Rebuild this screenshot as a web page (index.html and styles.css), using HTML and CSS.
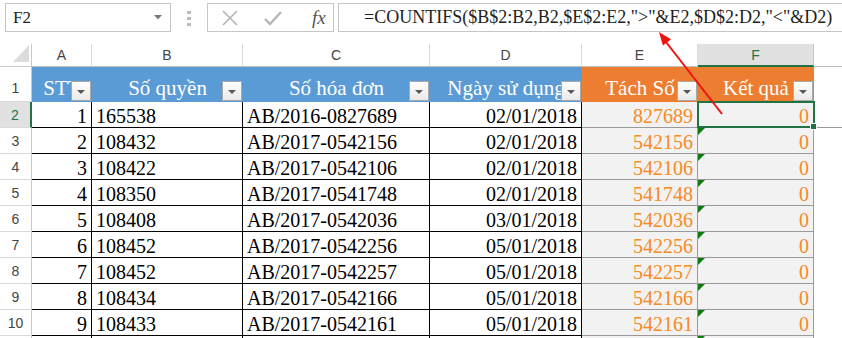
FILE: index.html
```html
<!DOCTYPE html>
<html lang="vi">
<head>
  <meta charset="UTF-8" />
  <title>COUNTIFS</title>
  <link rel="stylesheet" href="styles.css">
</head>
<body>
  <div class="topbar">
    <div class="namebox">
      <span>F2</span>
      <svg class="caret" width="8" height="5" viewBox="0 0 8 5"><path d="M0 0H8L4 4.5Z" fill="#7a7a7a"/></svg>
    </div>
    <div class="grip"><i></i><i></i><i></i></div>
    <div class="fbuttons">
      <svg width="16" height="16" viewBox="0 0 16 16"><path d="M1 1L15 15M15 1L1 15" stroke="#b5b5b5" stroke-width="1.6" fill="none"/></svg>
      <svg width="18" height="16" viewBox="0 0 18 16"><path d="M1 9L6 14L17 2" stroke="#b5b5b5" stroke-width="2.4" fill="none"/></svg>
      <span class="fx">fx</span>
    </div>
    <div class="formula">=COUNTIFS($B$2:B2,B2,$E$2:E2,"&gt;"&amp;E2,$D$2:D2,"&lt;"&amp;D2)</div>
  </div>

  <div class="sheet">
    <!-- column letters -->
    <div class="corner"><svg width="17" height="18" viewBox="0 0 17 18"><path d="M16 0V17H0Z" fill="#dcdcdc"/></svg></div>
    <div class="ch">A</div>
    <div class="ch">B</div>
    <div class="ch">C</div>
    <div class="ch">D</div>
    <div class="ch">E</div>
    <div class="ch sel">F</div>
    <div class="ch end"></div>

    <!-- table header -->
    <div class="rh tall">1</div>
    <div class="th blue">STT<span class="filter"></span></div>
    <div class="th blue">Số quyền<span class="filter"></span></div>
    <div class="th blue">Số hóa đơn<span class="filter"></span></div>
    <div class="th blue">Ngày sử dụng<span class="filter"></span></div>
    <div class="th orange">Tách Số<span class="filter"></span></div>
    <div class="th orange">Kết quả<span class="filter"></span></div>
    <div class="blank"></div>

    <div class="rh sel">2</div>
    <div class="c r">1</div><div class="c">165538</div><div class="c">AB/2016-0827689</div><div class="c r">02/01/2018</div>
    <div class="calc">827689</div><div class="calc active">0</div><div class="blank line"></div>

    <div class="rh">3</div>
    <div class="c r">2</div><div class="c">108432</div><div class="c">AB/2017-0542156</div><div class="c r">02/01/2018</div>
    <div class="calc">542156</div><div class="calc flag">0</div><div class="blank"></div>

    <div class="rh">4</div>
    <div class="c r">3</div><div class="c">108422</div><div class="c">AB/2017-0542106</div><div class="c r">02/01/2018</div>
    <div class="calc">542106</div><div class="calc flag">0</div><div class="blank"></div>

    <div class="rh">5</div>
    <div class="c r">4</div><div class="c">108350</div><div class="c">AB/2017-0541748</div><div class="c r">02/01/2018</div>
    <div class="calc">541748</div><div class="calc flag">0</div><div class="blank"></div>

    <div class="rh">6</div>
    <div class="c r">5</div><div class="c">108408</div><div class="c">AB/2017-0542036</div><div class="c r">03/01/2018</div>
    <div class="calc">542036</div><div class="calc flag">0</div><div class="blank"></div>

    <div class="rh">7</div>
    <div class="c r">6</div><div class="c">108452</div><div class="c">AB/2017-0542256</div><div class="c r">05/01/2018</div>
    <div class="calc">542256</div><div class="calc flag">0</div><div class="blank"></div>

    <div class="rh">8</div>
    <div class="c r">7</div><div class="c">108452</div><div class="c">AB/2017-0542257</div><div class="c r">05/01/2018</div>
    <div class="calc">542257</div><div class="calc flag">0</div><div class="blank"></div>

    <div class="rh">9</div>
    <div class="c r">8</div><div class="c">108434</div><div class="c">AB/2017-0542166</div><div class="c r">05/01/2018</div>
    <div class="calc">542166</div><div class="calc flag">0</div><div class="blank"></div>

    <div class="rh">10</div>
    <div class="c r">9</div><div class="c">108433</div><div class="c">AB/2017-0542161</div><div class="c r">05/01/2018</div>
    <div class="calc">542161</div><div class="calc flag">0</div><div class="blank"></div>

    <!-- next row, only its top edge is visible -->
    <div class="rh"></div>
    <div class="c r"></div><div class="c"></div><div class="c"></div><div class="c r"></div>
    <div class="calc"></div><div class="calc flag"></div><div class="blank"></div>
  </div>

  <svg class="arrow" width="842" height="338" viewBox="0 0 842 338">
    <line x1="722" y1="114" x2="666" y2="42" stroke="#f01010" stroke-width="2"/>
    <path d="M659 32L671 39.3L662.9 45.4Z" fill="#f01010"/>
  </svg>
</body>
</html>
```

FILE: styles.css
```css
body {
  margin: 0;
  width: 842px;
  height: 338px;
  overflow: hidden;
  position: relative;
  background: #fff;
  font-family: "Liberation Serif", serif;
  color: #000;
}
.topbar {
  display: flex;
  align-items: flex-start;
  height: 44px;
  padding: 3px 0 0 5px;
  box-sizing: border-box;
}
.namebox {
  width: 166px;
  height: 29px;
  box-sizing: border-box;
  border: 1px solid #c6c6c6;
  display: flex;
  align-items: center;
  justify-content: space-between;
  padding: 0 8px 0 7px;
  font-size: 17px;
  color: #222;
}
.grip {
  margin: 8px 0 0 16px;
  display: flex;
  flex-direction: column;
  gap: 3px;
}
.grip i {
  display: block;
  width: 4px;
  height: 3px;
  background: #bdbdbd;
}
.fbuttons {
  margin-left: 16px;
  width: 127px;
  height: 29px;
  box-sizing: border-box;
  border: 1px solid #c6c6c6;
  display: flex;
  align-items: center;
  padding-left: 14px;
  gap: 26px;
}
.fx {
  font-style: italic;
  font-size: 19px;
  color: #555;
  margin-left: 4px;
}
.formula {
  margin-left: 4px;
  flex: 1;
  height: 29px;
  box-sizing: border-box;
  border: 1px solid #c6c6c6;
  border-right: none;
  padding-left: 25px;
  font-size: 18px;
  line-height: 27px;
  white-space: nowrap;
  color: #222;
}

.sheet {
  display: grid;
  grid-template-columns: 32px 60px 151px 187px 152px 116px 116px 28px;
  grid-template-rows: 23px 35px repeat(10, 26px);
}
.sheet > div {
  box-sizing: border-box;
  position: relative;
}
.corner {
  border-right: 1px solid #c8c8c8;
  border-bottom: 1px solid #c8c8c8;
  display: flex;
  justify-content: flex-end;
  align-items: flex-end;
  padding: 0 1px 3px 0;
}
.ch {
  border-right: 1px solid #dadada;
  border-bottom: 1px solid #bfbfbf;
  font-family: "Liberation Sans", sans-serif;
  font-size: 14px;
  color: #444;
  text-align: center;
  line-height: 23px;
}
.ch.sel {
  background: #e1e1e1;
  color: #217346;
  border-bottom: 2px solid #217346;
  border-right-color: #c8c8c8;
}
.ch.end {
  border-right: none;
}
.rh {
  border-right: 1px solid #c8c8c8;
  border-bottom: 1px solid #dadada;
  font-family: "Liberation Sans", sans-serif;
  font-size: 14px;
  color: #444;
  text-align: center;
  line-height: 26px;
}
.rh.tall {
  line-height: 42px;
}
.rh.sel {
  background: #e1e1e1;
  color: #217346;
  border-right: 2px solid #217346;
}

.th {
  color: #fff;
  font-size: 21px;
  display: flex;
  justify-content: center;
  align-items: flex-end;
  padding-bottom: 3px;
  white-space: nowrap;
  line-height: 1;
}
.th.blue {
  background: #5b9bd5;
}
.th.orange {
  background: #ed7d31;
}
.filter {
  position: absolute;
  right: 1px;
  bottom: 1px;
  width: 20px;
  height: 20px;
  box-sizing: border-box;
  border: 1px solid #a9a9a9;
  background: linear-gradient(#ffffff, #e9e9e9);
}
.filter::after {
  content: "";
  position: absolute;
  left: 5px;
  top: 8px;
  border-left: 4px solid transparent;
  border-right: 4px solid transparent;
  border-top: 4px solid #595959;
}

.c {
  border-right: 1px solid #000;
  border-bottom: 1px solid #000;
  font-size: 20px;
  line-height: 28px;
  padding: 0 4px;
  white-space: nowrap;
}
.r {
  text-align: right;
}
.calc {
  background: #f2f2f2;
  border-right: 1px solid #9a9a9a;
  border-bottom: 1px solid #9a9a9a;
  color: #f78a23;
  font-size: 20px;
  line-height: 28px;
  padding: 0 4px;
  text-align: right;
}
.calc.flag::before {
  content: "";
  position: absolute;
  left: 0;
  top: 0;
  border-top: 7px solid #0f7b0f;
  border-right: 7px solid transparent;
}
.calc.active::after {
  content: "";
  position: absolute;
  left: -1px;
  top: -1px;
  right: -2px;
  bottom: -1px;
  border: 2px solid #217346;
}
.calc.active::before {
  content: "";
  position: absolute;
  right: -4px;
  bottom: -3px;
  width: 5px;
  height: 5px;
  background: #217346;
  border: 1px solid #fff;
  z-index: 2;
}
.blank.line {
  border-bottom: 1px solid #9a9a9a;
}
.arrow {
  position: absolute;
  left: 0;
  top: 0;
  pointer-events: none;
}
```
